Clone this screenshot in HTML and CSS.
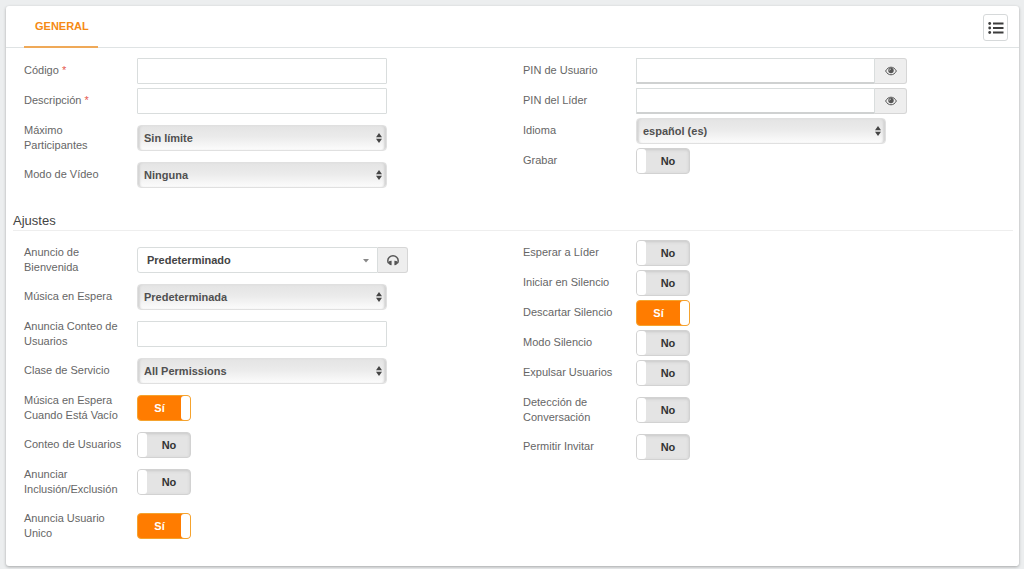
FILE: index.html
```html
<!DOCTYPE html>
<html lang="es">
<head>
<meta charset="utf-8">
<meta name="viewport" content="width=device-width, initial-scale=1">
<title>Conferencia</title>
<link rel="stylesheet" href="styles.css">
</head>
<body>
<svg class="sprite" aria-hidden="true">
  <symbol id="sort" viewBox="0 0 6 10"><path d="M3 0 6 4.2H0zM0 5.8h6L3 10z"/></symbol>
  <symbol id="caret" viewBox="0 0 6 4"><path d="M0 0h6L3 3.4z"/></symbol>
  <symbol id="eye" viewBox="0 0 12 10">
    <path fill="none" stroke="currentColor" stroke-width="1" d="M.6 5C2 2.5 3.800 1.200 6 1.200S10 2.500 11.400 5C10 7.500 8.200 8.800 6 8.800S2 7.500.6 5z"/>
    <circle cx="6" cy="4.500" r="2.700"/>
    <path fill="none" stroke="#eee" stroke-width=".7" d="M4.500 4.500A1.500 1.500 0 0 1 6 3"/>
  </symbol>
  <symbol id="headphones" viewBox="0 0 12 11">
    <path fill="none" stroke="currentColor" stroke-width="1.5" d="M1.900 8.400C.9 7.700.8 6.600.8 5.800a5.200 5 0 0 1 10.400 0c0 .8-.1 1.900-1.100 2.600"/>
    <path d="M2 6.200Q3 5.600 4.600 5.700V10.300Q2.600 10.300 2 9zM10 6.200Q9 5.600 7.400 5.700V10.300Q9.400 10.300 10 9z"/>
  </symbol>
</svg>
<main class="card">
  <header class="card-header">
    <nav class="tabs"><a class="tab" href="#general">GENERAL</a></nav>
    <button class="list-button" type="button" aria-label="Lista">
      <svg class="list-icon" viewBox="0 0 16 12" aria-hidden="true"><path d="M5 .5h10.500v2H5zM5 5h10.500v2H5zM5 9.500h10.500v2H5z"/><circle cx="1.700" cy="1.500" r="1.400"/><circle cx="1.700" cy="6" r="1.400"/><circle cx="1.700" cy="10.500" r="1.400"/></svg>
    </button>
  </header>
  <form id="general">
    <section class="columns">
      <div class="column">
        <div class="row"><label class="name" for="codigo">Código <span class="required">*</span></label><input class="text" id="codigo" type="text" required></div>
        <div class="row"><label class="name" for="descripcion">Descripción <span class="required">*</span></label><input class="text" id="descripcion" type="text" required></div>
        <div class="row"><label class="name" for="maximo">Máximo Participantes</label><div class="select-box"><select class="select" id="maximo"><option>Sin límite</option></select><svg class="sort"><use href="#sort"/></svg></div></div>
        <div class="row"><label class="name" for="video">Modo de Vídeo</label><div class="select-box"><select class="select" id="video"><option>Ninguna</option></select><svg class="sort"><use href="#sort"/></svg></div></div>
      </div>
      <div class="column">
        <div class="row"><label class="name" for="pin-usuario">PIN de Usuario</label><div class="group"><input class="text pin" id="pin-usuario" type="password"><button class="addon" type="button" aria-label="Mostrar PIN de usuario"><svg class="eye"><use href="#eye"/></svg></button></div></div>
        <div class="row"><label class="name" for="pin-lider">PIN del Líder</label><div class="group"><input class="text pin" id="pin-lider" type="password"><button class="addon" type="button" aria-label="Mostrar PIN del líder"><svg class="eye"><use href="#eye"/></svg></button></div></div>
        <div class="row"><label class="name" for="idioma">Idioma</label><div class="select-box"><select class="select" id="idioma"><option>español (es)</option></select><svg class="sort"><use href="#sort"/></svg></div></div>
        <div class="row"><label class="name" for="grabar">Grabar</label><label class="switch"><input id="grabar" type="checkbox"><span class="off">No</span><span class="on">Sí</span></label></div>
      </div>
    </section>
    <h2 class="section-title">Ajustes</h2>
    <section class="columns">
      <div class="column">
        <div class="row"><label class="name" for="anuncio">Anuncio de Bienvenida</label><div class="group"><div class="picker-box"><select class="picker" id="anuncio"><option>Predeterminado</option></select><svg class="caret"><use href="#caret"/></svg></div><button class="addon listen" type="button" aria-label="Escuchar"><svg class="headphones"><use href="#headphones"/></svg></button></div></div>
        <div class="row"><label class="name" for="musica">Música en Espera</label><div class="select-box"><select class="select" id="musica"><option>Predeterminada</option></select><svg class="sort"><use href="#sort"/></svg></div></div>
        <div class="row"><label class="name" for="conteo-anuncio">Anuncia Conteo de Usuarios</label><input class="text" id="conteo-anuncio" type="text"></div>
        <div class="row"><label class="name" for="clase">Clase de Servicio</label><div class="select-box"><select class="select" id="clase"><option>All Permissions</option></select><svg class="sort"><use href="#sort"/></svg></div></div>
        <div class="row"><label class="name" for="musica-vacio">Música en Espera Cuando Está Vacío</label><label class="switch"><input id="musica-vacio" type="checkbox" checked><span class="off">No</span><span class="on">Sí</span></label></div>
        <div class="row"><label class="name" for="conteo">Conteo de Usuarios</label><label class="switch"><input id="conteo" type="checkbox"><span class="off">No</span><span class="on">Sí</span></label></div>
        <div class="row"><label class="name" for="inclusion">Anunciar Inclusión/Exclusión</label><label class="switch"><input id="inclusion" type="checkbox"><span class="off">No</span><span class="on">Sí</span></label></div>
        <div class="row"><label class="name" for="unico">Anuncia Usuario Unico</label><label class="switch"><input id="unico" type="checkbox" checked><span class="off">No</span><span class="on">Sí</span></label></div>
      </div>
      <div class="column">
        <div class="row"><label class="name" for="esperar">Esperar a Líder</label><label class="switch"><input id="esperar" type="checkbox"><span class="off">No</span><span class="on">Sí</span></label></div>
        <div class="row"><label class="name" for="iniciar">Iniciar en Silencio</label><label class="switch"><input id="iniciar" type="checkbox"><span class="off">No</span><span class="on">Sí</span></label></div>
        <div class="row"><label class="name" for="descartar">Descartar Silencio</label><label class="switch"><input id="descartar" type="checkbox" checked><span class="off">No</span><span class="on">Sí</span></label></div>
        <div class="row"><label class="name" for="modo">Modo Silencio</label><label class="switch"><input id="modo" type="checkbox"><span class="off">No</span><span class="on">Sí</span></label></div>
        <div class="row"><label class="name" for="expulsar">Expulsar Usuarios</label><label class="switch"><input id="expulsar" type="checkbox"><span class="off">No</span><span class="on">Sí</span></label></div>
        <div class="row"><label class="name" for="deteccion">Detección de Conversación</label><label class="switch"><input id="deteccion" type="checkbox"><span class="off">No</span><span class="on">Sí</span></label></div>
        <div class="row"><label class="name" for="invitar">Permitir Invitar</label><label class="switch"><input id="invitar" type="checkbox"><span class="off">No</span><span class="on">Sí</span></label></div>
      </div>
    </section>
  </form>
</main>
</body>
</html>
```
FILE: styles.css
```css
* { box-sizing: border-box; }

body {
  margin: 0;
  padding: 6px 5px 3px 6px;
  background: #eceeef;
  color: #666;
  font: 11px/15px "Liberation Sans", Arial, sans-serif;
}

input, select, button { margin: 0; font: inherit; color: inherit; }

svg { display: block; fill: currentColor; }

.sprite { position: absolute; width: 0; height: 0; }

.card {
  padding-bottom: 18px;
  background: #fff;
  border-radius: 3px;
  box-shadow: 0 1px 3px rgba(0, 0, 0, .3);
}

.card-header {
  display: flex;
  justify-content: space-between;
  align-items: stretch;
  height: 42px;
  padding: 0 11px 0 18px;
  border-bottom: 1px solid #dfe3e4;
}

.tabs { display: flex; }

.tab {
  height: 42px;
  padding: 13px 9px 0 11px;
  border-bottom: 2px solid #efa958;
  color: #f58a14;
  font-weight: bold;
  text-decoration: none;
}

.list-button {
  display: grid;
  place-items: center;
  align-self: center;
  width: 25px;
  height: 27px;
  margin-top: 2px;
  padding: 0;
  border: 1px solid #d6d9da;
  border-radius: 3px;
  background: #fff;
  color: #3d3d3d;
}

.list-icon { width: 16px; height: 12px; }

.columns {
  display: grid;
  grid-template-columns: 1fr 1fr;
  column-gap: 3px;
  padding: 8px 0 0 18px;
}

.row {
  display: grid;
  grid-template-columns: 98px minmax(0, 1fr);
  column-gap: 15px;
  align-items: center;
  min-height: 30px;
}

.name { align-self: start; padding: 7px 0; }

.required { color: #e5584f; }

.text {
  width: 100%;
  max-width: 250px;
  height: 26px;
  padding: 0 6px;
  border: 1px solid #d9dddd;
  border-radius: 1px;
  background: #fff;
}

.select-box { position: relative; max-width: 250px; }

.select {
  display: block;
  width: 100%;
  height: 26px;
  padding: 0 20px 0 6px;
  border: 1px solid #e0e0e0;
  border-radius: 4px;
  appearance: none;
  background: linear-gradient(#e4e4e4, #ebebeb 45%, #fcfcfc);
  box-shadow: inset 3px 0 2px -1px #d4d4d4, inset -3px 0 2px -1px #d4d4d4;
  color: #505050;
  font-weight: bold;
}

.sort {
  position: absolute;
  top: 8px;
  right: 5px;
  width: 6px;
  height: 10px;
  color: #444;
  pointer-events: none;
}

.group { display: flex; max-width: 271px; }

.pin {
  flex: 1;
  min-width: 0;
  border-bottom: 2px solid #cfd1d1;
}

.addon {
  display: grid;
  place-items: center;
  width: 32px;
  height: 26px;
  padding: 0;
  border: 1px solid #d6d6d6;
  border-left: 0;
  border-radius: 0 3px 3px 0;
  background: #eee;
  color: #555;
}

.listen { width: 30px; }
.eye { width: 12px; height: 10px; }
.headphones { width: 12px; height: 11px; }

.picker-box { position: relative; flex: 1; }

.picker {
  display: block;
  width: 100%;
  height: 26px;
  padding: 0 20px 0 9px;
  border: 1px solid #d9dddd;
  border-radius: 3px 0 0 3px;
  appearance: none;
  background: #fff;
  color: #444;
  font-weight: bold;
}

.caret {
  position: absolute;
  top: 12px;
  right: 9px;
  width: 6px;
  height: 4px;
  color: #888;
  pointer-events: none;
}

.switch {
  position: relative;
  display: flex;
  width: 54px;
  height: 26px;
  padding-left: 10px;
  border: 1px solid #d2d2d2;
  border-radius: 4px;
  background: #e4e4e4;
  box-shadow: inset 0 1px 3px #c8c8c8;
  color: #333;
  font-weight: bold;
  line-height: 24px;
  text-align: center;
}

.switch input {
  position: absolute;
  inset: 0;
  width: 100%;
  height: 100%;
  opacity: 0;
}

.switch::before {
  content: "";
  position: absolute;
  top: 0;
  bottom: 0;
  left: 0;
  width: 9px;
  border-radius: 3px;
  background: #fff;
}

.switch span { flex: 1; }
.switch .on { display: none; }

.switch:has(:checked) {
  padding: 0 9px 0 0;
  border-color: #f5a32e;
  background: #ff7c00;
  box-shadow: none;
  color: #fff;
}

.switch:has(:checked)::before { left: auto; right: 0; }
.switch:has(:checked) .on { display: block; }
.switch:has(:checked) .off { display: none; }

.section-title {
  margin: 22px 6px 0 7px;
  border-bottom: 1px solid #eee;
  color: #444;
  font-size: 13px;
  font-weight: normal;
  line-height: 18px;
}
.section-title + .columns { padding-top: 7px; }
```
